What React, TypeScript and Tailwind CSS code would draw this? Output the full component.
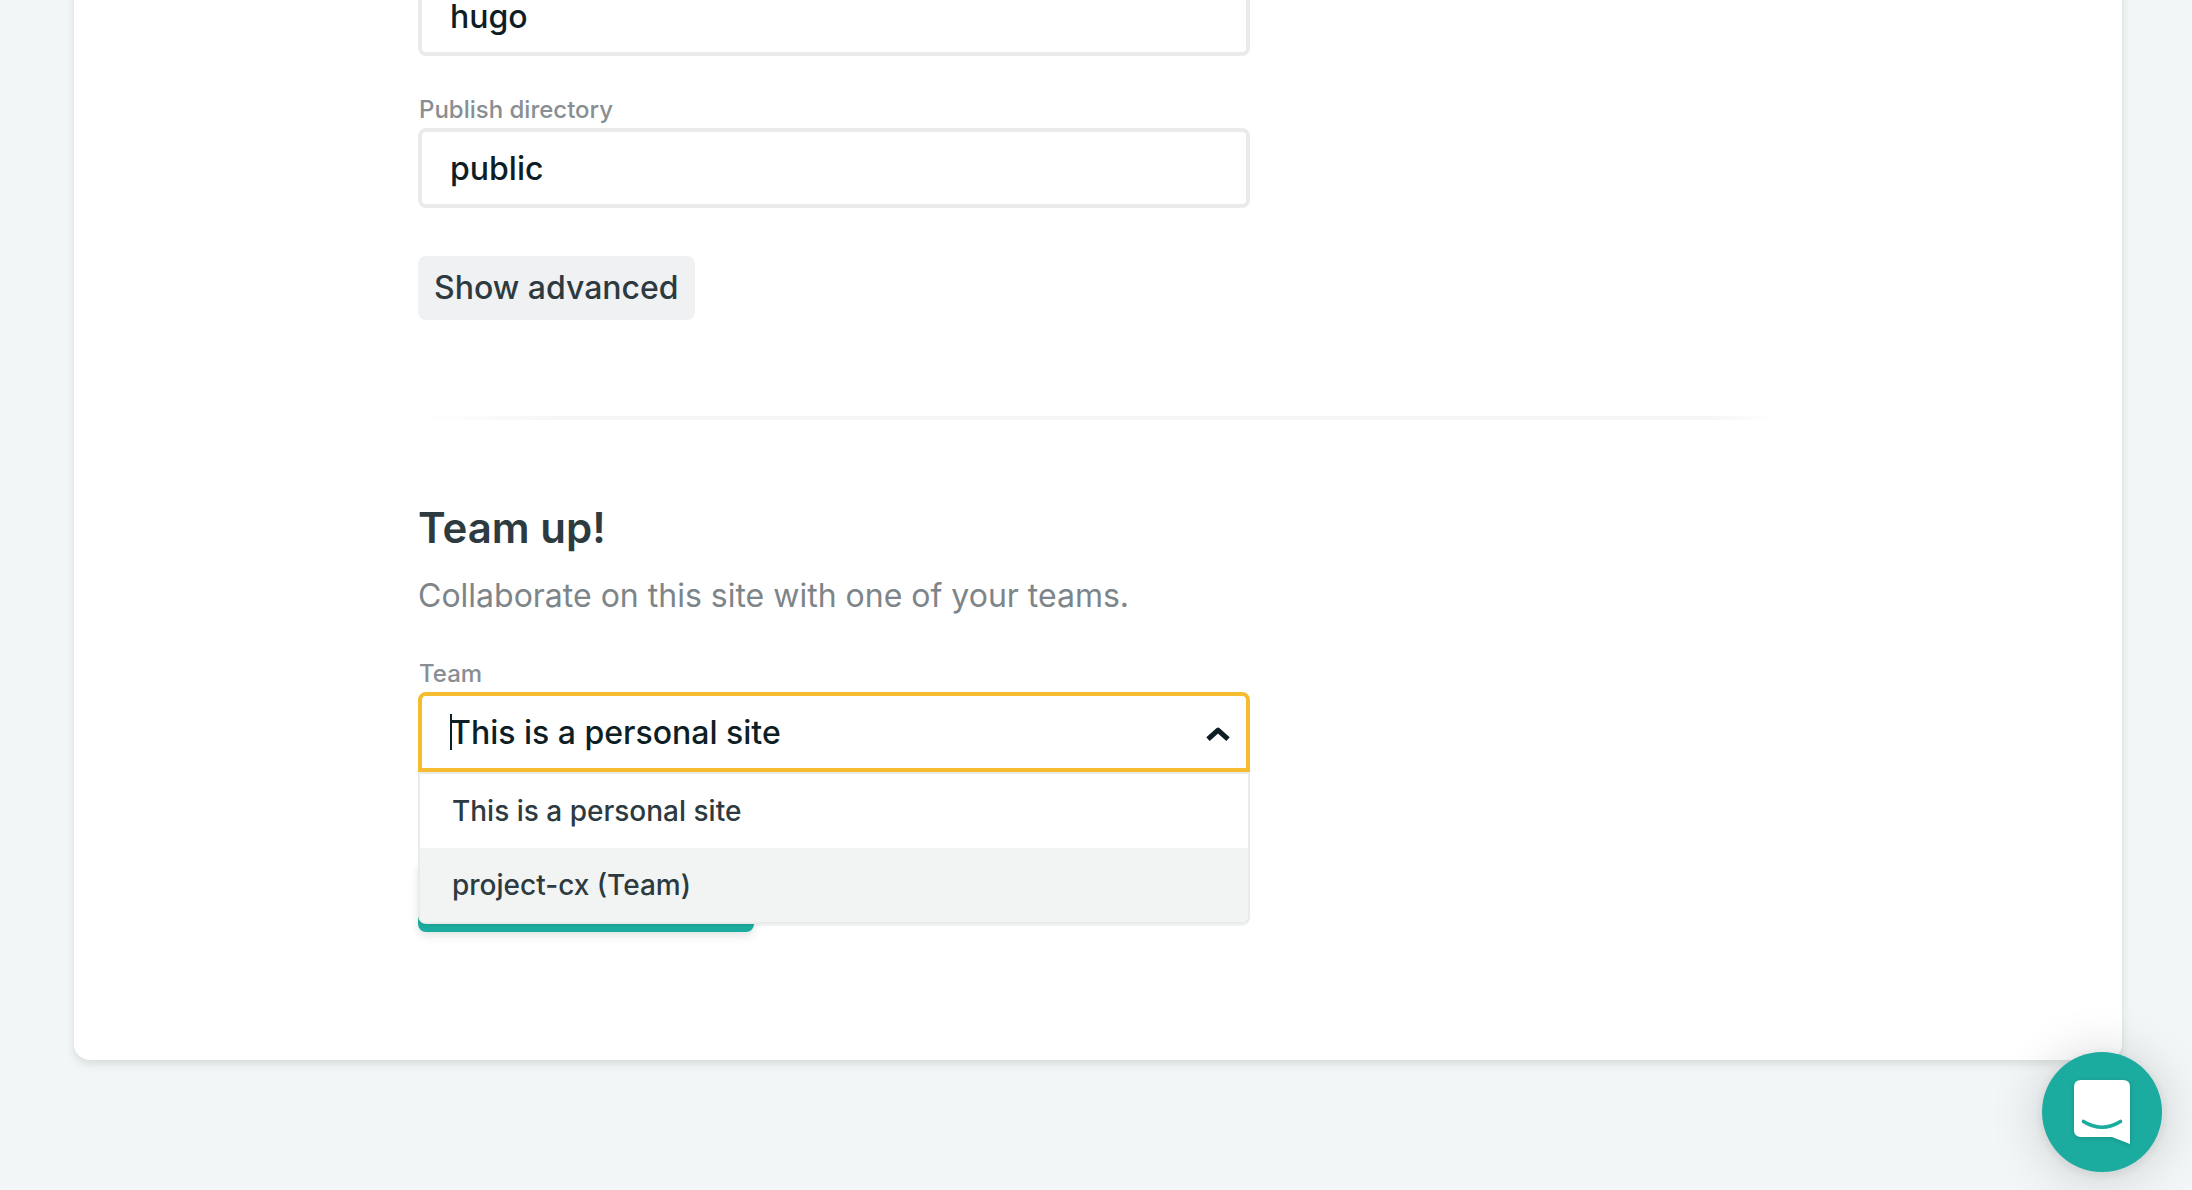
import React from "react";

const teams = [
  { label: "This is a personal site", active: false },
  { label: "project-cx (Team)", active: true },
];

const fieldClass =
  "block h-20 w-full rounded-lg border-4 border-[#e9ebeb] bg-white px-7 text-[32px] font-medium text-[#0e1e25] outline-none";
const labelClass = "block pl-px text-2xl leading-8 font-medium text-[#888e91]";

function TeamPicker() {
  return (
    <div className="flex flex-col gap-0.5">
      <label htmlFor="team" className={labelClass}>
        Team
      </label>
      <div className="relative z-10">
        <input
          id="team"
          role="combobox"
          aria-expanded="true"
          aria-controls="team-options"
          defaultValue="This is a personal site"
          className="block h-20 w-full rounded-t-lg border-4 border-[#f6bc2f] bg-white px-7 text-[32px] font-medium text-[#0e1e25] outline-none"
        />
        <span className="absolute top-[22px] left-8 h-9 w-0.5 bg-[#0e1e25]" />
        <svg
          aria-hidden="true"
          viewBox="0 0 24 14"
          className="absolute top-[35px] right-5 h-[14px] w-6"
          fill="none"
          stroke="#0e1e25"
          strokeWidth="5"
        >
          <path d="M2 12.2 12 3.200 22 12.2" strokeLinejoin="round" />
        </svg>
        <ul
          id="team-options"
          role="listbox"
          aria-label="Team"
          className="absolute inset-x-0 top-full overflow-hidden rounded-b-lg border-2 border-[#e9ebeb] bg-white shadow-[0_2px_0_rgba(14,30,37,0.06)]"
        >
          {teams.map((team) => (
            <li
              key={team.label}
              role="option"
              aria-selected={team.active}
              className="flex h-[74px] items-center px-8 text-[28px] font-medium text-[#2d3b41] aria-selected:bg-[#f2f4f4]"
            >
              {team.label}
            </li>
          ))}
        </ul>
      </div>
    </div>
  );
}

function ChatLauncher() {
  return (
    <button
      type="button"
      aria-label="Open chat"
      className="fixed right-[30px] bottom-[18px] flex size-[120px] items-center justify-center rounded-full bg-[#1cab9f] shadow-[0_4px_48px_8px_rgba(0,0,0,0.12),0_2px_12px_rgba(0,0,0,0.1)]"
    >
      <svg viewBox="0 0 56 64" className="h-16 w-14 drop-shadow-sm">
        <path
          d="M7 0H49Q56 0 56 7V64L38 57H7Q0 57 0 50V7Q0 0 7 0Z"
          fill="#fff"
        />
        <path
          d="M9.5 41.500Q28 53 46.500 41.500"
          fill="none"
          stroke="#1cab9f"
          strokeWidth="3.600"
          strokeLinecap="round"
        />
      </svg>
    </button>
  );
}

export default function App() {
  return (
    <div className="min-h-screen overflow-hidden bg-[#f2f6f7] pr-[70px] pb-[130px] pl-[74px] font-['Inter',sans-serif]">
      <main className="-mt-6 rounded-b-2xl bg-white pb-32 shadow-[0_4px_8px_rgba(14,30,37,0.12)]">
        <form className="mx-auto max-w-[1360px]">
          <div className="flex max-w-[832px] flex-col items-start">
            <input aria-label="Build command" defaultValue="hugo" className={fieldClass} />
            <div className="mt-[38px] flex w-full flex-col gap-0.5">
              <label htmlFor="publish" className={labelClass}>
                Publish directory
              </label>
              <input id="publish" defaultValue="public" className={fieldClass} />
            </div>
            <button
              type="button"
              className="mt-12 h-16 rounded-lg bg-[#f0f1f3] px-4 text-[32px] font-medium text-[#2d3b41]"
            >
              Show advanced
            </button>
          </div>

          <hr className="mt-24 h-1 border-0 bg-[linear-gradient(to_right,transparent,#f5f6f8_10%,#f5f6f8_95%,transparent)]" />

          <section className="mt-20 max-w-[832px]">
            <h2 className="text-[42px] leading-[56px] font-semibold text-[#2d3b41]">Team up!</h2>
            <p className="mt-4 mb-[38px] text-[32px] leading-[48px] text-[#7d8589]">
              Collaborate on this site with one of your teams.
            </p>
            <TeamPicker />
          </section>

          <button
            type="submit"
            aria-label="Deploy site"
            className="mt-[88px] block h-18 w-[336px] rounded-lg bg-[#1cab9f] shadow-[0_4px_8px_rgba(14,30,37,0.12)]"
          />
        </form>
      </main>
      <ChatLauncher />
    </div>
  );
}
